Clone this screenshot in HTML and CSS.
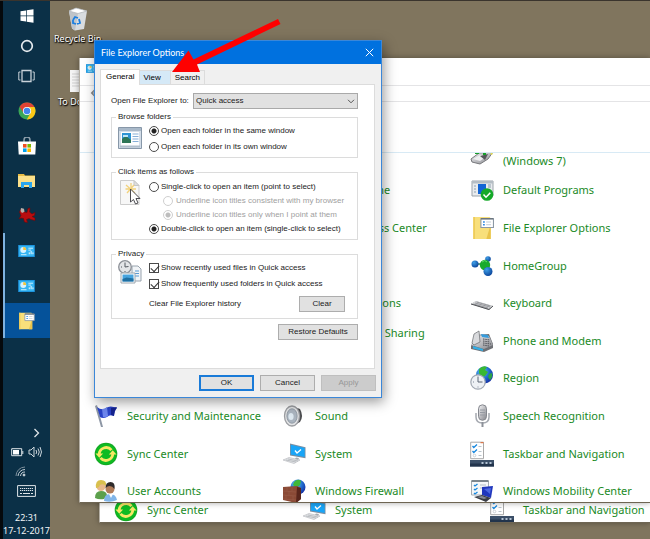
FILE: index.html
```html
<!DOCTYPE html>
<html lang="en">
<head>
<meta charset="utf-8">
<title>File Explorer Options</title>
<link rel="stylesheet" href="styles.css">
</head>
<body>
<svg class="defs" aria-hidden="true">
  <defs>
    <linearGradient id="steel" x1="0" y1="0" x2="1" y2="1"><stop offset="0" stop-color="#f4f4f6"/><stop offset="1" stop-color="#85868c"/></linearGradient>
    <radialGradient id="ball" cx=".35" cy=".3" r=".8"><stop offset="0" stop-color="#3fa0e8"/><stop offset="1" stop-color="#063c94"/></radialGradient>
    <radialGradient id="globe" cx=".35" cy=".3" r=".8"><stop offset="0" stop-color="#58c8f5"/><stop offset=".6" stop-color="#1d62c8"/><stop offset="1" stop-color="#14259c"/></radialGradient>
  </defs>
  <symbol id="sync" viewBox="0 0 24 24">
    <circle cx="12" cy="12" r="11.3" fill="#14a823"/><circle cx="12" cy="12" r="10.3" fill="#0ebb22"/>
    <path d="M5.200 12.500a6.900 6.900 0 0 1 12.300-4.300" fill="none" stroke="#f7e765" stroke-width="2.800"/>
    <path d="M18.800 11.500a6.900 6.900 0 0 1-12.300 4.300" fill="none" stroke="#f7e765" stroke-width="2.800"/>
    <path d="M1.500 11.500h7.600l-3.800 4.200z" fill="#f7e765"/><path d="M22.500 12.500h-7.600l3.800-4.200z" fill="#f7e765"/>
  </symbol>
  <symbol id="system" viewBox="0 0 24 24">
    <path d="M8 1.500l15.500 3.800v11L8 13.500z" fill="#7c8ea0"/><path d="M8.800 2.700l13.900 3.400v9L8.800 12.600z" fill="#19a5f7"/>
    <path d="M13 8.500l2 2.500 4-3.500" fill="none" stroke="#fff" stroke-width="1.300"/>
    <path d="M14 15.500l3 .500-1 2h-4z" fill="#a6abb1"/><path d="M1 18l6-2.500 11 2.500-6 3.500z" fill="#e3e5e8" stroke="#b3b6ba" stroke-width=".600"/>
    <path d="M4 18l10 2M6 17l10 2" stroke="#a9adb2" stroke-width=".700"/>
  </symbol>
  <symbol id="taskbar-nav" viewBox="0 0 24 26">
    <path d="M.700 1.200h12.800v16.500H.700z" fill="#fff" stroke="#a9a9a9"/><path d="M10.500 1.200h3v1h-3z" fill="#e2642c"/>
    <path d="M2.500 5l1.300 1.500L7 3.500M2.500 10l1.300 1.500L7 8.500" fill="none" stroke="#1687de" stroke-width="1.300"/>
    <path d="M8.500 5.500h3M8.500 10.500h3M8.500 14.500h3" stroke="#b9c3cb"/><circle cx="4.500" cy="14.500" r="1.300" fill="none" stroke="#c0c7cd" stroke-width=".800"/>
    <path d="M0 19h24v6.500H0z" fill="#3b4f68"/><path d="M0 22.500h24v3H0z" fill="#22344c"/>
    <path d="M11.500 21h2v2h-2zM15.500 21h2v2h-2zM19.500 21h2v2h-2z" fill="#b4c3d4"/>
  </symbol>
  <symbol id="panel" viewBox="0 0 18 13">
    <path d="M0 0h18v13H0z" fill="#1d93de"/><path d="M1 1h16v11H1z" fill="#35b4f2"/>
    <circle cx="5.500" cy="5.500" r="3.200" fill="#d7f2ff"/><path d="M5.500 5.500V2.300a3.200 3.200 0 0 1 3.200 3.200z" fill="#f5c339"/>
    <path d="M11 3.500h5M11 5.500h3M3 10.500h6" stroke="#d7f2ff"/><path d="M12 10V8M14 10V6.500M16 10V8" stroke="#fff"/>
  </symbol>
  <symbol id="folder-options" viewBox="0 0 20 22">
    <path d="M1 1h15l1 1v19H1z" fill="#f8df7b"/><path d="M1 1h1.500v20H1z" fill="#edcb58"/><path d="M13 21l3-10 1-1v11z" fill="#e9c34b"/>
    <path d="M8 2.500h11.500v8H8z" fill="#fff" stroke="#8c98a4"/><path d="M8 2.500h11.500" stroke="#6c7680" stroke-width="1.500"/>
    <path d="M10 5.500h1.500M10 8h1.500" stroke="#1b7ee0" stroke-width="1.300"/><path d="M12.800 5.500h4.500M12.800 8h4.500" stroke="#b8c2cc" stroke-width=".800"/>
  </symbol>
</svg>

<main class="desktop">
  <nav class="taskbar" aria-label="Taskbar">
    <div class="system-keys">
      <button aria-label="Start"><svg width="14" height="14" viewBox="0 0 14 14" fill="#fff"><path d="M.500 2.300L6 1.400v5.200H.500zM6.700 1.300L13.500.200v6.400H6.700zM.500 7.300H6v5.200l-5.500-.800zM6.700 7.300h6.800v6.500l-6.800-1z"/></svg></button>
      <button aria-label="Cortana"><svg width="14" height="14" viewBox="0 0 14 14"><circle cx="7" cy="7" r="5.300" fill="none" stroke="#e6ebef" stroke-width="1.700"/></svg></button>
      <button aria-label="Task View"><svg width="17" height="14" viewBox="0 0 17 14" fill="none" stroke="#c9d2d9"><path d="M4 1.500h9v11H4z" stroke-width="1.300"/><path d="M2.500 3H.800v8h1.700M14.500 3h1.700v8h-1.700"/></svg></button>
    </div>
    <div class="apps">
      <button aria-label="Chrome"><svg width="18" height="18" viewBox="0 0 18 18"><circle cx="9" cy="9" r="8.500" fill="#3ba757"/><path d="M9 9L1.600 4.800A8.500 8.500 0 0 1 16.400 4.800z" fill="#df4334"/><path d="M9 5h7.500a8.500 8.500 0 0 1-7.700 12.500L12.500 11z" fill="#fbc817"/><path d="M1.600 4.800L5.500 11 9 5z" fill="#df4334"/><circle cx="9" cy="9" r="4.100" fill="#fff"/><circle cx="9" cy="9" r="3.300" fill="#4285ec"/></svg></button>
      <button aria-label="Store"><svg width="18" height="18" viewBox="0 0 18 18"><path d="M6 5V3a3 3 0 0 1 6 0v2" fill="none" stroke="#8fa0ad" stroke-width="1.500"/><path d="M0 4.500h18L17.300 17.500H.700z" fill="#fff"/><path d="M5 7h3.600v3.600H5z" fill="#f04e23"/><path d="M9.400 7H13v3.600H9.400z" fill="#7eb900"/><path d="M5 11.400h3.600V15H5z" fill="#00a2ed"/><path d="M9.400 11.400H13V15H9.400z" fill="#fdb900"/></svg></button>
      <button aria-label="File Explorer"><svg width="17" height="15" viewBox="0 0 17 15"><path d="M0 1h6l1 1.500h10V14H0z" fill="#e9bc45"/><path d="M0 3h17v11H0z" fill="#fbe08a"/><path d="M3 15V9h11v6h-3v-3H6v3z" fill="#2aa5ee"/></svg></button>
      <button aria-label="IrfanView"><svg width="18" height="17" viewBox="0 0 18 17"><path d="M3 2l3 3 3 .500 1-4L12 1l-.500 4 2.500 2 3-1.500-.500 3-2.500 1 3 1.500v2.500l-4-1-2-1-2.500 1 1 3-3-.500-1-3.500L3 11l-2 1 2-3.500L1.500 5z" fill="#b90d10" stroke="#730507" stroke-width=".600"/><path d="M3 1l3 .800.500 3L4 6 2.500 4z" fill="#b9aeaa"/></svg></button>
      <button class="open" aria-label="Control Panel"><svg width="17" height="12"><use href="#panel"/></svg></button>
      <button class="open" aria-label="Control Panel, second window"><svg width="17" height="12"><use href="#panel"/></svg></button>
      <button class="open current" aria-label="File Explorer Options"><svg width="17" height="18"><use href="#folder-options"/></svg></button>
    </div>
    <div class="tray">
      <svg class="chevron" width="8" height="10" viewBox="0 0 8 10"><path d="M1.500 1l4 4-4 4" fill="none" stroke="#dfe5e9" stroke-width="1.300"/></svg>
      <div class="tray-row">
        <svg width="13" height="9" viewBox="0 0 13 9"><path d="M.700.700h10v7H.700z" fill="none" stroke="#dfe5e9"/><path d="M2 2h6v4.500H2z" fill="#fff"/><path d="M11.800 3v3" stroke="#dfe5e9"/></svg>
        <svg width="14" height="12" viewBox="0 0 14 12" fill="none" stroke="#cdd6dc"><path d="M1 4h2l3-3v10L3 8H1zM8 4q1.500 2 0 4M10 2.500q2.500 3.500 0 7M12 1q3 5 0 10"/></svg>
      </div>
      <svg class="wifi" width="11" height="11" viewBox="0 0 11 11" fill="none" stroke="#c3cdd4"><path d="M1 10A9 9 0 0 1 10 1" stroke="#7a8d9a"/><path d="M3 10a7 7 0 0 1 7-6.500M5.500 10A4.500 4.500 0 0 1 10 6"/><circle cx="9" cy="9" r="1" fill="#dfe5e9"/></svg>
      <svg class="keyboard" width="19" height="12" viewBox="0 0 19 12" fill="none" stroke="#dfe5e9"><path d="M.600.600h17.800v10.800H.600z"/><path d="M3 3.500h13M3 5.500h13" stroke-dasharray="1.300 .700"/><path d="M3 8.500h2M6 8.500h7M14 8.500h2"/></svg>
      <time>22:31</time>
      <time>17-12-2017</time>
    </div>
  </nav>

  <div class="shortcut bin">
    <svg width="22" height="24" viewBox="0 0 22 24"><path d="M2 4l7-3 11 3-3 18-9 1.500-3-2z" fill="#d9dcdf"/><path d="M2 4l9 2.500L8 23.500l-3-2z" fill="#bfc4c9"/><path d="M2 4l7-3 11 3-9 2.500z" fill="#f8f8f8" stroke="#aeb2b6" stroke-width=".700"/><path d="M5 4l4-2 5 1 3 1-6 1.500z" fill="#fff"/><path d="M6 13l2-3 3 1M12 12l1 4-3 1M9 17l-3-1v-3" fill="none" stroke="#1d7fe0" stroke-width="1.800"/></svg>
    <span>Recycle Bin</span>
  </div>
  <div class="shortcut note">
    <svg width="16" height="22" viewBox="0 0 16 22"><path d="M0 0h16v22H0z" fill="#f4f4f4"/><path d="M2 4h12M2 7h12M2 10h12M2 13h12M2 16h12" stroke="#cfcfcf"/></svg>
    <span>To Do List</span>
  </div>

  <section class="window back">
    <div class="items">
      <a href="#"><svg width="24" height="24"><use href="#sync"/></svg>Sync Center</a>
      <a href="#"><svg width="24" height="24"><use href="#system"/></svg>System</a>
      <a href="#"><svg width="24" height="26"><use href="#taskbar-nav"/></svg>Taskbar and Navigation</a>
    </div>
  </section>

  <section class="window front" aria-label="Control Panel">
    <header class="caption"><svg width="12" height="9"><use href="#panel"/></svg></header>
    <div class="address"><svg width="12" height="10" viewBox="0 0 12 10"><path d="M12 5H1.500M5.500 1l-4 4 4 4" fill="none" stroke="#8b8b8b" stroke-width="1.200"/></svg></div>
    <div class="heading"></div>
    <div class="list">
      <div class="items">
        <a class="c3" href="#"><svg width="24" height="24" viewBox="0 0 24 24"><path d="M1 18l8-6 14-1-5 7-8 5-8-2z" fill="url(#steel)" stroke="#77787c"/><path d="M3 18l7-4 7 1-7 5z" fill="#ededf0"/><path d="M10 15l8-2-3 6z" fill="#54565a"/><path d="M5 11h4v2H5zM13 11h3v3h-3z" fill="#15a128"/><path d="M20 10l3 3-2 1z" fill="#e4dc4b"/></svg><span>Backup and Restore<br>(Windows 7)</span></a>
        <a class="c2" href="#"><i></i>Date and Time</a>
        <a class="c3" href="#"><svg width="24" height="24" viewBox="0 0 24 24"><path d="M2 3h21v15H2z" fill="#e8ebee" stroke="#9ba3aa"/><path d="M2 3h21v2.500H2z" fill="#b5bdc4"/><path d="M4 8h2M4 11h2M4 14h2" stroke="#8fa0ae"/><path d="M8 6h8v10H8z" fill="#1264d4"/><path d="M18 7h3M18 9h3" stroke="#8fa0ae"/><circle cx="17" cy="16.500" r="6.300" fill="#14a928"/><path d="M13.500 16.500l2.500 2.700 4.300-4.500" fill="none" stroke="#fff" stroke-width="1.500"/></svg>Default Programs</a>
        <a class="c2" href="#"><i></i>Ease of Access Center</a>
        <a class="c3" href="#"><svg width="24" height="24" viewBox="-2 0 22 22"><use href="#folder-options" width="20" height="22"/></svg>File Explorer Options</a>
        <a class="c3" href="#"><svg width="24" height="24" viewBox="0 0 24 24"><path d="M5 10h10M15 12l3-7M15 13l3 5" stroke="#347c5c" stroke-width="1.500"/><circle cx="5" cy="10" r="3.500" fill="url(#ball)"/><circle cx="18" cy="5" r="2.800" fill="url(#ball)"/><circle cx="15" cy="11" r="5.200" fill="#19aa2d"/><path d="M12 8q3-3 5 0" stroke="#63d86d" fill="none"/><circle cx="18" cy="17.500" r="4.500" fill="url(#ball)"/></svg>HomeGroup</a>
        <a class="c2" href="#"><i></i>Internet Options</a>
        <a class="c3" href="#"><svg width="24" height="24" viewBox="0 0 24 24"><path d="M1 13l5-3 17 5-4 4z" fill="#a8a9ac"/><path d="M1 13l5-3 17 5-4 3z" fill="#d7d8da"/><path d="M3.500 13L18 17M5 12l15 4M6.500 11l14 4" stroke="#85878b" stroke-width=".800"/><path d="M1 13l18 5.500 4-3.500" stroke="#4f5155" fill="none"/></svg>Keyboard</a>
        <a class="c2" href="#"><i></i><span>Network and Sharing<br>Center</span></a>
        <a class="c3" href="#"><svg width="24" height="24" viewBox="0 0 24 24"><path d="M1 17L5 6l14-1 4 10v4l-9 4L1 20z" fill="#6e7075"/><path d="M1 16L6 6l13 1 4 9-9 4z" fill="url(#steel)"/><path d="M4 5l5-3 1 11-6 3-2-2z" fill="#d9dadd" stroke="#66686d" stroke-width=".700"/><path d="M11 5l7 1 1 3-7-1z" fill="#359bdc"/><path d="M13 10l7 1M13 12l7 1M13 14l8 1M13 16l6 1" stroke="#505258" stroke-dasharray="1.500 .800"/><path d="M3 17l10 3v2L3 19.500z" fill="#31aee8"/></svg>Phone and Modem</a>
        <a class="c3" href="#"><svg width="24" height="24" viewBox="0 0 24 24"><circle cx="14.500" cy="9" r="8.500" fill="url(#globe)"/><path d="M9 3q4-4 8-2l-2 3 3 2-3 4-4 1-2-4z" fill="#39b833"/><path d="M19 8l3-1q1 4-2 7l-2-3z" fill="#2ba345"/><circle cx="8" cy="16" r="7.200" fill="#eef1f5" stroke="#a0a7b2" stroke-width="1.200"/><path d="M8 10.500V16h4.500" fill="none" stroke="#5b6575"/><path d="M8 20.500v1M3 16h1" stroke="#80899a"/></svg>Region</a>
        <a href="#"><svg width="24" height="24" viewBox="0 0 24 24"><path d="M1 2l6 21h2L3 1z" fill="#8e97a5"/><path d="M3 3q5 4 9 1 4-3 11 0-3 3-3 8-4-2-7 1-4 2-7 0z" fill="#2a43c7"/><path d="M8 5q3 0 5-2l1 9q-3 2-5 1z" fill="#6d86ee"/><path d="M17 4l6-1q-3 4-3 9l-3-1z" fill="#15238f"/></svg>Security and Maintenance</a>
        <a href="#"><svg width="24" height="24" viewBox="0 0 24 24"><path d="M10 2l8 3q4 7 0 13l-8 4z" fill="#4c4d50"/><ellipse cx="10" cy="12" rx="7.500" ry="10" fill="#e2e3e5" stroke="#9b9da1" stroke-width="1.300"/><ellipse cx="10" cy="12" rx="5.200" ry="7.300" fill="#aab4bf" stroke="#77818c" stroke-width=".600"/><ellipse cx="9" cy="12.500" rx="2.600" ry="3.500" fill="#dce7ef"/></svg>Sound</a>
        <a href="#"><svg width="24" height="24" viewBox="0 0 24 24"><path d="M6 9v4q0 6 6.500 6T19 13V9" fill="none" stroke="#a5a9b0" stroke-width="1.500"/><rect x="8.500" y=".800" width="8" height="15.500" rx="4" fill="url(#steel)" stroke="#85888f"/><path d="M10 6h5M10 8.500h5M10 11h5" stroke="#969aa2"/><path d="M12.500 18v5" stroke="#8d9199" stroke-width="2"/></svg>Speech Recognition</a>
        <a href="#"><svg width="24" height="24"><use href="#sync"/></svg>Sync Center</a>
        <a href="#"><svg width="24" height="24"><use href="#system"/></svg>System</a>
        <a href="#"><svg width="24" height="26"><use href="#taskbar-nav"/></svg>Taskbar and Navigation</a>
        <a href="#"><svg width="24" height="24" viewBox="0 0 24 24"><path d="M1 19q0-7 6-7t6 5l-3 3q-5 1-9-1z" fill="#5ca04c"/><circle cx="7" cy="7.500" r="4.500" fill="#e8b98a"/><path d="M2 9q-1-8 5-8t5 6q-3-3-6-1-1 3-4 3z" fill="#d9c04e"/><path d="M10 22q0-7 6-7t7 6q-6 3-13 1z" fill="#80b5e8"/><circle cx="16" cy="10" r="4.500" fill="#b17c58"/><path d="M11.500 9q0-6 5-6t4 7q-2-3-5-3-2 0-4 2z" fill="#2e2a2b"/><path d="M15 15l2 4 2-4z" fill="#fff"/></svg>User Accounts</a>
        <a href="#"><svg width="24" height="24" viewBox="0 0 24 24"><circle cx="16" cy="8" r="7.500" fill="url(#globe)"/><path d="M12 3q4-4 7-1l-1 4-4 3-3-3z" fill="#3fb83a"/><path d="M1 8l14-1 4 2v11l-5 4-13-3z" fill="#8b4a36"/><path d="M15 8l4 1v11l-5 4z" fill="#59261c"/><path d="M1 12l13 1M1 16l13 1M1 20l13 1M5 8v4M10 8v4M7 12v4M4 16v4M11 17v4" stroke="#a06450" stroke-width=".400"/></svg>Windows Firewall</a>
        <a href="#"><svg width="24" height="24" viewBox="0 0 24 24"><path d="M1.500 2h17v14h-17z" fill="#f5f7f9" stroke="#a4abb2"/><path d="M1.500 2h17" stroke="#7d868e" stroke-width="2"/><path d="M4 6l1 1 2.500-2M4 10l1 1 2.500-2M4 14l1 1 2.500-2" fill="none" stroke="#1687de" stroke-width="1.300"/><path d="M10 6h6M10 9h4" stroke="#b1bcc5"/><path d="M12 8l11-1-2 12-9-3z" fill="#2037bd"/><path d="M14 10l7-1-1 6z" fill="#4d68e2"/><path d="M4 18l8-2 9 3-5 4z" fill="#3a3d45"/><path d="M7 18l5-1 5 2-3 1z" fill="#878b95"/></svg>Windows Mobility Center</a>
      </div>
    </div>
  </section>

  <section class="dialog" role="dialog" aria-labelledby="dialog-title">
    <header>
      <h1 id="dialog-title">File Explorer Options</h1>
      <button aria-label="Close"><svg width="9" height="9" viewBox="0 0 9 9"><path d="M.800.800l7.400 7.400M8.200.800L.800 8.200" stroke="#fff" fill="none"/></svg></button>
    </header>
    <div class="tabs" role="tablist">
      <button role="tab" aria-selected="true">General</button>
      <button role="tab" class="hover">View</button>
      <button role="tab">Search</button>
    </div>
    <form class="page">
      <div class="open-to">
        <label for="open-to">Open File Explorer to:</label>
        <div class="select">
          <select id="open-to"><option>Quick access</option></select>
          <svg width="8" height="5" viewBox="0 0 8 5"><path d="M1 .800l3 3 3-3" fill="none" stroke="#555"/></svg>
        </div>
      </div>
      <fieldset>
        <legend>Browse folders</legend>
        <div class="group browse">
          <svg width="24" height="22" viewBox="0 0 24 22"><path d="M.500.500h23v21H.500z" fill="#d3dde8" stroke="#8797a8"/><path d="M1 1h22v3H1z" fill="#a9b9c9"/><path d="M3 5h18v14H3z" fill="#fdfefe"/><path d="M4 6h9v10H4z" fill="#2d94d4"/><path d="M4 12l4-3 5 4v3H4z" fill="#2e7657"/><path d="M5 8h5v2H5z" fill="#bde5f7"/><path d="M14.500 7h6M14.500 9.500h6M14.500 12h6M14.500 14.500h6" stroke="#86afd8"/><path d="M2 19.500h20" stroke="#b0bfcd" stroke-width="2"/></svg>
          <div class="choices loose">
            <label><input type="radio" name="browse" checked>Open each folder in the same window</label>
            <label><input type="radio" name="browse">Open each folder in its own window</label>
          </div>
        </div>
      </fieldset>
      <fieldset>
        <legend>Click items as follows</legend>
        <div class="group click">
          <svg width="24" height="26" viewBox="0 0 24 26"><path d="M2.500.500H16l5 5v19H2.500z" fill="#f7f7f7" stroke="#cdcdcd"/><path d="M16 .500l5 5h-5z" fill="#dedede" stroke="#c6c6c6"/><path d="M13 3v9M8 5l9 8M7.500 9H18M9 13l7-8" stroke="#f2d27c" stroke-width="1.300"/><path d="M12.500 9v13l3-2.500 2 4.500 2.500-1-2-4.500h4z" fill="#fff" stroke="#4b4b50"/></svg>
          <div class="choices">
            <label><input type="radio" name="click">Single-click to open an item (point to select)</label>
            <label class="sub"><input type="radio" name="underline" disabled>Underline icon titles consistent with my browser</label>
            <label class="sub"><input type="radio" name="underline" disabled checked>Underline icon titles only when I point at them</label>
            <label><input type="radio" name="click" checked>Double-click to open an item (single-click to select)</label>
          </div>
        </div>
      </fieldset>
      <fieldset>
        <legend>Privacy</legend>
        <div class="group privacy">
          <svg width="24" height="24" viewBox="0 0 24 24"><path d="M14 6h6l3 3v12h-9z" fill="#f1f4f7" stroke="#98a3ae"/><path d="M17 11h4M17 13.500h4M17 16h4" stroke="#5a9bd4"/><circle cx="7" cy="7" r="6.300" fill="#e3e5e8" stroke="#8c9097" stroke-width="1.300"/><path d="M7 2.500V7l3.500-.500M3 7h1M7 11v1" fill="none" stroke="#555a62"/><path d="M3 13h14v10H3z" fill="#fff" stroke="#9da6ae"/><path d="M4.500 14.500h11v7h-11z" fill="#48a4de"/><path d="M4.500 19l4-1.500 7 1v3h-11z" fill="#1f6fa2"/></svg>
          <div class="choices loose">
            <label><input type="checkbox" checked>Show recently used files in Quick access</label>
            <label><input type="checkbox" checked>Show frequently used folders in Quick access</label>
            <div class="history"><span>Clear File Explorer history</span><button type="button">Clear</button></div>
          </div>
        </div>
      </fieldset>
      <button type="button" class="restore">Restore Defaults</button>
    </form>
    <footer>
      <button class="default">OK</button>
      <button>Cancel</button>
      <button disabled>Apply</button>
    </footer>
  </section>

  <svg class="pointer" width="112" height="58" viewBox="0 0 112 58" aria-hidden="true"><path d="M1 55L17.500 33.500l5 9L107 2l2.500 5L26 47.500l3 7.500z" fill="#fe0000"/></svg>
</main>
</body>
</html>
```
FILE: styles.css
```css
* { box-sizing: border-box; }

body {
  margin: 0;
  font-family: "Noto Sans", "Open Sans", sans-serif;
  font-size: 11px;
  line-height: 16px;
}

button { font: inherit; padding: 0; margin: 0; border: 0; background: none; }
svg { display: block; flex: none; }
.defs { position: absolute; width: 0; height: 0; }

.desktop {
  position: relative;
  display: flex;
  height: 100vh;
  min-height: 539px;
  overflow: hidden;
  background: #80755e;
  border-top: 1px solid #3a342d;
}

/* Taskbar */
.taskbar {
  display: flex;
  flex-direction: column;
  width: 50px;
  background: #0b3047;
  border-left: 3px solid #05090c;
}
.taskbar button { display: flex; width: 100%; align-items: center; justify-content: center; }
.system-keys button { height: 30px; }
.apps { padding-top: 2px; }
.apps button { height: 35px; border: solid transparent; border-width: 0 2px; }
.apps .open { border-left-color: #7fb2df; }
.apps .current { background: #05529a; border-right-color: #05529a; }
.tray {
  display: flex;
  flex-direction: column;
  align-items: center;
  margin-top: auto;
  padding-bottom: 2px;
  color: #f2f5f7;
  font-size: 9px;
  line-height: 13px;
}
.tray-row { display: flex; align-items: center; gap: 4px; margin: 8px 0; }
.chevron { margin-left: 20px; }
.wifi { margin-right: 12px; }
.keyboard { margin: 8px 0 14px; }

/* Desktop shortcuts */
.shortcut {
  position: absolute;
  color: #fff;
  font-size: 9px;
  line-height: 12px;
  white-space: nowrap;
  text-shadow: 0 1px 2px #000, 1px 1px 1px #000;
}
.bin { left: 54px; top: 6px; }
.bin svg { margin: 0 0 2px 13px; }
.note { left: 58px; top: 69px; }
.note svg { margin: 0 0 4px 12px; }

/* Control Panel windows */
.window {
  position: absolute;
  right: 0;
  overflow: hidden;
  background: #fff;
  border-left: 1px solid #b5b0a6;
  border-bottom: 1px solid #6e6553;
  box-shadow: 0 0 6px rgba(0, 0, 0, .35);
}
.back { left: 99px; top: 490px; height: 32px; }
.front { display: flex; flex-direction: column; left: 79px; top: 57px; bottom: 36px; }
.caption { height: 27px; padding: 6px; }
.address { height: 17px; padding: 2px 10px; border: solid #e4e4e6; border-width: 1px 0; }
.heading { height: 51px; border-bottom: 1px solid #d8eaf5; }
.list { flex: 1; overflow: hidden; }
.items {
  display: grid;
  grid-template-columns: repeat(3, minmax(188px, 1fr));
  padding-left: 14px;
}
.list .items { grid-template-rows: repeat(10, 1fr); height: 376px; margin-top: -19px; }
.back .items { height: 38px; }
.items a {
  display: flex;
  align-items: center;
  color: #218a26;
  text-decoration: none;
}
.items svg, .items i { flex: none; width: 24px; margin-right: 9px; }
.items .c2 { grid-column: 2; }
.items .c3 { grid-column: 3; }

/* Options dialog */
.dialog {
  position: absolute;
  left: 94px;
  top: 39px;
  width: 288px;
  background: #f0f0f0;
  border: 1px solid #3b87d8;
  box-shadow: 2px 4px 12px rgba(0, 0, 0, .4);
  color: #1a1a1a;
  font-family: "Liberation Sans", sans-serif;
  font-size: 8px;
  line-height: 12px;
}
.dialog header {
  display: flex;
  align-items: center;
  justify-content: space-between;
  height: 23px;
  padding: 0 7px 0 6px;
  background: #0071df;
  color: #fff;
}
.dialog h1 { margin: 0; font: 9px/12px Lato, sans-serif; }
.tabs { display: flex; align-items: flex-end; padding: 5px 0 0 5px; }
.tabs button {
  height: 14px;
  padding: 0 4px;
  border: 1px solid #dcdcdc;
  border-width: 1px 1px 0 0;
  background: #f0f0f0;
}
.tabs [aria-selected] { height: 16px; margin-bottom: -1px; padding: 0 5px 2px; border-left-width: 1px; background: #fff; z-index: 1; }
.tabs .hover { padding: 0 9px 0 3px; background: #d5e9f7; }
.page {
  display: flex;
  flex-direction: column;
  height: 285px;
  margin: 0 6px 0 5px;
  padding: 8px 16px 0 10px;
  background: #fff;
  border: 1px solid #dcdcdc;
}
.open-to { display: flex; align-items: center; justify-content: space-between; margin-bottom: 2px; white-space: nowrap; }
.select { position: relative; width: 165px; }
.select svg { position: absolute; right: 3px; top: 6px; pointer-events: none; }
select {
  display: block;
  appearance: none;
  width: 100%;
  height: 16px;
  padding: 0 2px;
  font: inherit;
  color: inherit;
  background: #e1e1e1;
  border: 1px solid #a9a9a9;
  border-radius: 0;
}
fieldset { min-width: 0; margin: 0 0 8px; padding: 0 0 0 6px; border: 1px solid #dcdcdc; }
legend { padding: 0 2px; margin-left: -2px; }
.group { display: flex; gap: 7px; }
.browse { height: 34px; }
.browse svg { margin-top: 4px; }
.click { height: 61px; padding-top: 2px; }
.privacy { height: 58px; }
.choices { flex: 1; display: flex; flex-direction: column; }
.choices label { display: flex; align-items: center; gap: 2px; height: 14px; white-space: nowrap; }
.loose label { height: 16px; }
.choices .sub { margin-left: 14px; gap: 3px; color: #a0a0a0; }
input {
  flex: none;
  appearance: none;
  width: 10px;
  height: 10px;
  margin: 0;
  background: #fff;
  border: 1px solid #4a4a4a;
}
input[type="radio"] { border-radius: 50%; }
input[type="radio"]:checked { background: radial-gradient(circle, #222 0 2px, #fff 3px); }
input:disabled { border-color: #cfcfcf; }
input[type="radio"]:disabled:checked { background: radial-gradient(circle, #bdbdbd 0 2px, #fff 3px); }
input[type="checkbox"]::before {
  content: "";
  display: block;
  width: 7px;
  height: 4px;
  margin: 1px 0 0 1px;
  border: solid #333;
  border-width: 0 0 1px 1px;
  transform: rotate(-47deg);
}
.history { display: flex; align-items: center; justify-content: space-between; margin-top: 4px; padding-right: 12px; }
.history button, .restore, footer button {
  height: 16px;
  color: #1a1a1a;
  background: #e1e1e1;
  border: 1px solid #adadad;
}
.history button { width: 46px; }
.restore { align-self: flex-end; width: 80px; margin-top: -3px; }
footer { display: flex; justify-content: flex-end; gap: 6px; padding: 6px 5px; }
footer button { width: 55px; }
footer .default { border: 2px solid #1a7bd8; }
footer button:disabled { color: #979797; background: #cccccc; border-color: #bfbfbf; }

.pointer { position: absolute; left: 171px; top: 16px; }
```
